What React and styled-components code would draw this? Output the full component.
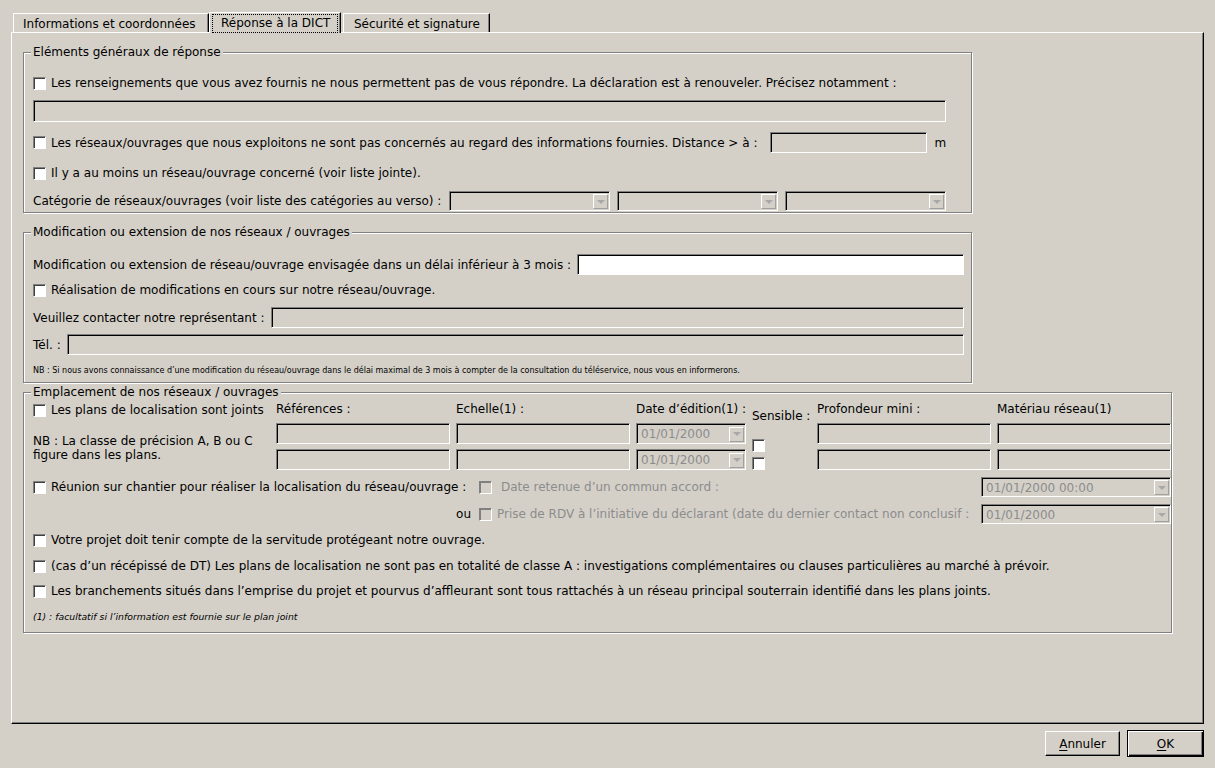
import styled, { createGlobalStyle } from "styled-components";

const GlobalStyle = createGlobalStyle`
  html, body {
    margin: 0;
    padding: 0;
    background: #d4d0c8;
  }
  body {
    font-family: "DejaVu Sans", "Liberation Sans", sans-serif;
    font-size: 12px;
    color: #000;
  }
`;

const px = (v) => (typeof v === "string" ? v : `${v || 0}px`);

const Window = styled.div`
  width: 1215px;
  height: 768px;
  box-sizing: border-box;
  padding: 12px 11px 0;
  background: #d4d0c8;
`;

const TabBar = styled.div`
  display: flex;
  align-items: flex-end;
  height: 20px;
  padding-left: 2px;
`;

const Tab = styled.div`
  position: relative;
  z-index: ${(p) => (p.$active ? 1 : 0)};
  box-sizing: border-box;
  display: flex;
  align-items: center;
  width: ${(p) => p.$w}px;
  height: ${(p) => (p.$active ? 21 : 19)}px;
  margin-bottom: ${(p) => (p.$active ? -1 : 0)}px;
  margin-left: ${(p) => p.$ml || 0}px;
  padding-left: ${(p) => p.$pl}px;
  padding-top: ${(p) => (p.$active ? 0 : 1)}px;
  background: #d4d0c8;
  border-top: 1px solid #fff;
  border-left: 1px solid #fff;
  border-right: 1px solid #000;
  box-shadow: inset -1px 0 0 #808080;
  white-space: nowrap;
`;

const FocusRing = styled.span`
  display: block;
  padding: 1px 7px 2px 8px;
  border: 1px dotted #000;
`;

const Panel = styled.div`
  box-sizing: border-box;
  height: 692px;
  padding: 19px 0 0 11px;
  border-top: 1px solid #fff;
  border-left: 1px solid #fff;
  border-right: 1px solid #000;
  border-bottom: 1px solid #000;
  box-shadow: inset -1px -1px 0 #808080;
`;

const Group = styled.div`
  position: relative;
  box-sizing: border-box;
  display: flex;
  flex-direction: column;
  width: ${(p) => p.$w}px;
  height: ${(p) => p.$h}px;
  margin-top: ${(p) => p.$mt || 0}px;
  padding: ${(p) => p.$pt || 0}px 0 0 9px;
  border: 1px solid #808080;
  box-shadow: inset 1px 1px 0 #fff, 1px 1px 0 #fff;
`;

const Legend = styled.span`
  position: absolute;
  top: -8px;
  left: 7px;
  padding: 0 2px;
  line-height: 14px;
  background: #d4d0c8;
  white-space: nowrap;
`;

const Row = styled.div`
  display: flex;
  align-items: center;
  justify-content: ${(p) => p.$justify || "flex-start"};
  height: ${(p) => p.$h || 20}px;
  width: ${(p) => (p.$w ? `${p.$w}px` : "auto")};
  margin-top: ${(p) => p.$mt || 0}px;
  white-space: nowrap;
`;

const CheckBox = styled.span`
  flex: none;
  box-sizing: border-box;
  width: 13px;
  height: 13px;
  margin-top: ${(p) => p.$mt || 0}px;
  background: ${(p) => (p.$disabled ? "#d4d0c8" : "#fff")};
  border-top: 1px solid #808080;
  border-left: 1px solid #808080;
  border-right: 1px solid #fff;
  border-bottom: 1px solid #fff;
  box-shadow: inset 1px 1px 0 ${(p) => (p.$disabled ? "#808080" : "#404040")};
`;

const CheckText = styled.span`
  margin-left: ${(p) => p.$ml || 5}px;
  color: ${(p) => (p.$disabled ? "#8c8c8c" : "#000")};
`;

const Unit = styled.span`
  margin-left: 7px;
`;

const TextField = styled.div`
  flex: none;
  box-sizing: border-box;
  width: ${(p) => p.$w}px;
  height: ${(p) => p.$h || 21}px;
  margin-top: ${(p) => p.$mt || 0}px;
  margin-left: ${(p) => p.$ml || 0}px;
  background: ${(p) => (p.$white ? "#fff" : "#d4d0c8")};
  border-top: 1px solid #808080;
  border-left: 1px solid #808080;
  border-right: 1px solid #fff;
  border-bottom: 1px solid #fff;
  box-shadow: inset 1px 1px 0 #000;
`;

const ComboBox = styled.div`
  flex: none;
  box-sizing: border-box;
  display: flex;
  align-items: center;
  width: ${(p) => p.$w}px;
  height: ${(p) => p.$h || 20}px;
  margin-top: ${(p) => px(p.$mt)};
  margin-left: ${(p) => px(p.$ml)};
  padding: 1px 1px 0 4px;
  background: #d4d0c8;
  border-top: 1px solid #808080;
  border-left: 1px solid #808080;
  border-right: 1px solid #fff;
  border-bottom: 1px solid #fff;
  box-shadow: inset 1px 1px 0 #000;
  color: #8c8c8c;
`;

const ComboValue = styled.span`
  flex: 1;
  overflow: hidden;
  white-space: nowrap;
`;

const ComboArrow = styled.span`
  flex: none;
  box-sizing: border-box;
  display: flex;
  align-items: center;
  justify-content: center;
  width: 15px;
  height: 15px;
  border-top: 1px solid #fff;
  border-left: 1px solid #fff;
  border-right: 1px solid #a0a0a0;
  border-bottom: 1px solid #a0a0a0;
  &::after {
    content: "";
    width: 0;
    height: 0;
    border-left: 4px solid transparent;
    border-right: 4px solid transparent;
    border-top: 4px solid #a8a8a8;
  }
`;

const ComboSet = styled.div`
  display: flex;
  gap: 7px;
`;

const Note = styled.div`
  margin-top: ${(p) => p.$mt || 0}px;
  font-size: ${(p) => (p.$italic ? 9.3 : 8)}px;
  line-height: 12px;
  font-style: ${(p) => (p.$italic ? "italic" : "normal")};
  white-space: nowrap;
`;

const PlansBlock = styled.div`
  display: flex;
  gap: 6px;
`;

const LeftCol = styled.div`
  display: flex;
  flex-direction: column;
  width: 237px;
  padding-top: 7px;
`;

const NbText = styled.div`
  margin-top: 14px;
  line-height: 14px;
`;

const FieldCol = styled.div`
  display: flex;
  flex-direction: column;
  width: ${(p) => p.$w}px;
  padding-top: ${(p) => p.$pt || 9}px;
`;

const ColLabel = styled.div`
  height: 14px;
  line-height: 14px;
  white-space: nowrap;
`;

const LeadCell = styled.div`
  display: flex;
  align-items: center;
  justify-content: ${(p) => (p.$end ? "flex-end" : "flex-start")};
  box-sizing: border-box;
  width: 446px;
  padding-right: ${(p) => (p.$end ? 8 : 0)}px;
`;

const Footer = styled.div`
  display: flex;
  justify-content: flex-end;
  align-items: center;
  gap: 7px;
  padding-top: 6px;
`;

const Button = styled.div`
  box-sizing: border-box;
  display: flex;
  align-items: center;
  justify-content: center;
  width: ${(p) => p.$w}px;
  height: ${(p) => (p.$default ? 27 : 25)}px;
  border: 1px solid ${(p) => (p.$default ? "#000" : "#fff")};
  border-right-color: #000;
  border-bottom-color: #000;
  box-shadow: ${(p) =>
    p.$default
      ? "inset 1px 1px 0 #fff, inset -1px -1px 0 #000, inset -2px -2px 0 #808080"
      : "inset -1px -1px 0 #808080"};
  u {
    text-decoration: underline;
    text-underline-offset: 2px;
  }
`;

const Combo = ({ w, h, mt, ml, value }) => (
  <ComboBox $w={w} $h={h} $mt={mt} $ml={ml}>
    <ComboValue>{value}</ComboValue>
    <ComboArrow />
  </ComboBox>
);

const App = () => {
  return (
    <Window>
      <GlobalStyle />
      <TabBar>
        <Tab $w={196} $pl={9}>
          Informations et coordonnées
        </Tab>
        <Tab $w={132} $pl={2} $active>
          <FocusRing>Réponse à la DICT</FocusRing>
        </Tab>
        <Tab $w={147} $pl={10} $ml={2}>
          Sécurité et signature
        </Tab>
      </TabBar>
      <Panel>
        <Group $w={949} $h={161} $pt={20}>
          <Legend>Eléments généraux de réponse</Legend>
          <Row>
            <CheckBox />
            <CheckText>
              Les renseignements que vous avez fournis ne nous permettent pas
              de vous répondre. La déclaration est à renouveler. Précisez
              notamment :
            </CheckText>
          </Row>
          <TextField $w={913} $h={22} $mt={7} />
          <Row $h={21} $mt={10}>
            <CheckBox />
            <CheckText>
              Les réseaux/ouvrages que nous exploitons ne sont pas concernés au
              regard des informations fournies. Distance &gt; à :
            </CheckText>
            <TextField $w={157} $h={21} $ml={13} />
            <Unit>m</Unit>
          </Row>
          <Row $mt={10}>
            <CheckBox />
            <CheckText>
              Il y a au moins un réseau/ouvrage concerné (voir liste jointe).
            </CheckText>
          </Row>
          <Row $mt={8} $w={913} $justify="space-between">
            <span>
              Catégorie de réseaux/ouvrages (voir liste des catégories au
              verso) :
            </span>
            <ComboSet>
              <Combo w={161} />
              <Combo w={161} />
              <Combo w={161} />
            </ComboSet>
          </Row>
        </Group>

        <Group $w={949} $h={151} $pt={21} $mt={19}>
          <Legend>Modification ou extension de nos réseaux / ouvrages</Legend>
          <Row $h={21} $w={931} $justify="space-between">
            <span>
              Modification ou extension de réseau/ouvrage envisagée dans un
              délai inférieur à 3 mois :
            </span>
            <TextField $w={387} $white />
          </Row>
          <Row $mt={5}>
            <CheckBox />
            <CheckText>
              Réalisation de modifications en cours sur notre réseau/ouvrage.
            </CheckText>
          </Row>
          <Row $h={21} $mt={7} $w={931} $justify="space-between">
            <span>Veuillez contacter notre représentant :</span>
            <TextField $w={693} />
          </Row>
          <Row $h={21} $mt={6} $w={931} $justify="space-between">
            <span>Tél. :</span>
            <TextField $w={897} />
          </Row>
          <Note $mt={10}>
            NB : Si nous avons connaissance d’une modification du
            réseau/ouvrage dans le délai maximal de 3 mois à compter de la
            consultation du téléservice, nous vous en informerons.
          </Note>
        </Group>

        <Group $w={1149} $h={241} $mt={9}>
          <Legend>Emplacement de nos réseaux / ouvrages</Legend>
          <PlansBlock>
            <LeftCol>
              <Row>
                <CheckBox />
                <CheckText>Les plans de localisation sont joints</CheckText>
              </Row>
              <NbText>
                NB : La classe de précision A, B ou C
                <br />
                figure dans les plans.
              </NbText>
            </LeftCol>
            <FieldCol $w={174}>
              <ColLabel>Références :</ColLabel>
              <TextField $w={174} $mt={7} />
              <TextField $w={174} $mt={5} />
            </FieldCol>
            <FieldCol $w={174}>
              <ColLabel>Echelle(1) :</ColLabel>
              <TextField $w={174} $mt={7} />
              <TextField $w={174} $mt={5} />
            </FieldCol>
            <FieldCol $w={110}>
              <ColLabel>Date d’édition(1) :</ColLabel>
              <Combo w={110} h={21} mt={7} value="01/01/2000" />
              <Combo w={110} h={21} mt={5} value="01/01/2000" />
            </FieldCol>
            <FieldCol $w={59} $pt={16}>
              <ColLabel>Sensible :</ColLabel>
              <CheckBox $mt={16} />
              <CheckBox $mt={5} />
            </FieldCol>
            <FieldCol $w={174}>
              <ColLabel>Profondeur mini :</ColLabel>
              <TextField $w={174} $mt={7} />
              <TextField $w={174} $mt={5} />
            </FieldCol>
            <FieldCol $w={174}>
              <ColLabel>Matériau réseau(1)</ColLabel>
              <TextField $w={174} $mt={7} />
              <TextField $w={174} $mt={5} />
            </FieldCol>
          </PlansBlock>
          <Row $mt={7} $w={1138}>
            <LeadCell>
              <CheckBox />
              <CheckText>
                Réunion sur chantier pour réaliser la localisation du
                réseau/ouvrage :
              </CheckText>
            </LeadCell>
            <CheckBox $disabled />
            <CheckText $disabled $ml={9}>
              Date retenue d’un commun accord :
            </CheckText>
            <Combo w={190} ml="auto" value="01/01/2000 00:00" />
          </Row>
          <Row $mt={7} $w={1138}>
            <LeadCell $end>ou</LeadCell>
            <CheckBox $disabled />
            <CheckText $disabled $ml={5}>
              Prise de RDV à l’initiative du déclarant (date du dernier contact
              non conclusif :
            </CheckText>
            <Combo w={190} ml="auto" value="01/01/2000" />
          </Row>
          <Row $mt={6}>
            <CheckBox />
            <CheckText>
              Votre projet doit tenir compte de la servitude protégeant notre
              ouvrage.
            </CheckText>
          </Row>
          <Row $mt={6}>
            <CheckBox />
            <CheckText>
              (cas d’un récépissé de DT) Les plans de localisation ne sont pas
              en totalité de classe A : investigations complémentaires ou
              clauses particulières au marché à prévoir.
            </CheckText>
          </Row>
          <Row $mt={5}>
            <CheckBox />
            <CheckText>
              Les branchements situés dans l’emprise du projet et pourvus
              d’affleurant sont tous rattachés à un réseau principal souterrain
              identifié dans les plans joints.
            </CheckText>
          </Row>
          <Note $mt={10} $italic>
            (1) : facultatif si l’information est fournie sur le plan joint
          </Note>
        </Group>
      </Panel>
      <Footer>
        <Button $w={75}>
          <span>
            <u>A</u>nnuler
          </span>
        </Button>
        <Button $w={77} $default>
          <span>
            <u>O</u>K
          </span>
        </Button>
      </Footer>
    </Window>
  );
};

export default App;
